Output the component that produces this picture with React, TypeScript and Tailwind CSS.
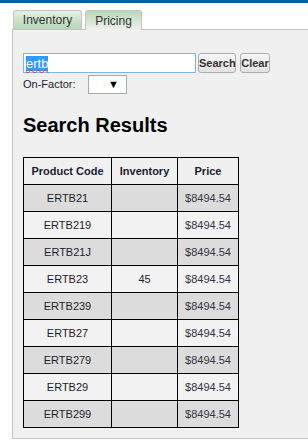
const rows = [
  { code: 'ERTB21', inv: '', price: '$8494.54' },
  { code: 'ERTB219', inv: '', price: '$8494.54' },
  { code: 'ERTB21J', inv: '', price: '$8494.54' },
  { code: 'ERTB23', inv: '45', price: '$8494.54' },
  { code: 'ERTB239', inv: '', price: '$8494.54' },
  { code: 'ERTB27', inv: '', price: '$8494.54' },
  { code: 'ERTB279', inv: '', price: '$8494.54' },
  { code: 'ERTB29', inv: '', price: '$8494.54' },
  { code: 'ERTB299', inv: '', price: '$8494.54' },
]

export default function App() {
  return (
    <div className="w-[308px] h-[440px] bg-white overflow-hidden text-[#1c1c2e]" style={{ fontFamily: '"Liberation Sans", Arial, sans-serif' }}>
      <div className="h-[3px] bg-[#00629b]" />

      {/* tabs */}
      <div className="flex items-end pl-[13px] pt-[6px] gap-[3px]">
        <div className="w-[69px] h-[19px] rounded-t-[3px] border border-b-0 border-[#c4c4c4] bg-gradient-to-b from-[#e4f0e4] to-[#b4d6b4] flex items-center justify-center text-[12px] text-[#333]">
          Inventory
        </div>
        <div className="w-[57px] h-[20px] rounded-t-[3px] border border-b-0 border-[#c4c4c4] bg-gradient-to-b from-[#b6d8b6] to-[#f0f0f0] flex items-center justify-center text-[12px] text-[#333] relative top-[1px]">
          Pricing
        </div>
      </div>

      {/* panel */}
      <div className="ml-[12px] h-[410px] border-l border-t border-b border-[#c4c4c4] bg-[#f0f0f0] pl-[10px] pt-[23px]">
        <div className="flex items-center">
          <div className="w-[173px] h-[20px] border border-[#7eb4ea] bg-white flex items-center px-[2px]">
            <span className="bg-[#3399ff] text-white text-[13px] leading-[15px] underline decoration-wavy decoration-[#e03030] decoration-1">ertb</span>
          </div>
          <button className="ml-[2px] w-[38px] h-[20px] rounded-[3px] border border-[#adadad] bg-gradient-to-b from-[#f6f6f6] to-[#e2e2e2] text-[11px] font-semibold text-[#333]">
            Search
          </button>
          <button className="ml-[4px] w-[30px] h-[20px] rounded-[3px] border border-[#adadad] bg-gradient-to-b from-[#f6f6f6] to-[#e2e2e2] text-[11px] font-semibold text-[#333]">
            Clear
          </button>
        </div>

        <div className="flex items-center mt-[2px]">
          <span className="text-[11px] w-[65px]">On-Factor:</span>
          <div className="w-[39px] h-[19px] border border-[#a9a9a9] bg-white flex items-center justify-end pr-[7px] text-[11px] leading-none text-black">
            ▼
          </div>
        </div>

        <h2 className="mt-[18px] text-[20px] font-bold leading-[26px] text-black">Search Results</h2>

        <table className="mt-[19px] border-collapse text-[11px]">
          <thead>
            <tr className="h-[27px] bg-[#f0f0f0]">
              <th className="w-[88px] border border-black font-bold">Product Code</th>
              <th className="w-[66px] border border-black font-bold">Inventory</th>
              <th className="w-[61px] border border-black font-bold">Price</th>
            </tr>
          </thead>
          <tbody>
            {rows.map((r, i) => (
              <tr key={r.code} className={`h-[27px] ${i % 2 === 0 ? 'bg-[#dcdcdc]' : 'bg-[#f2f2f2]'}`}>
                <td className="border border-black text-center">{r.code}</td>
                <td className="border border-black text-center">{r.inv}</td>
                <td className="border border-black text-center text-[#333344]">{r.price}</td>
              </tr>
            ))}
          </tbody>
        </table>
      </div>
    </div>
  )
}
